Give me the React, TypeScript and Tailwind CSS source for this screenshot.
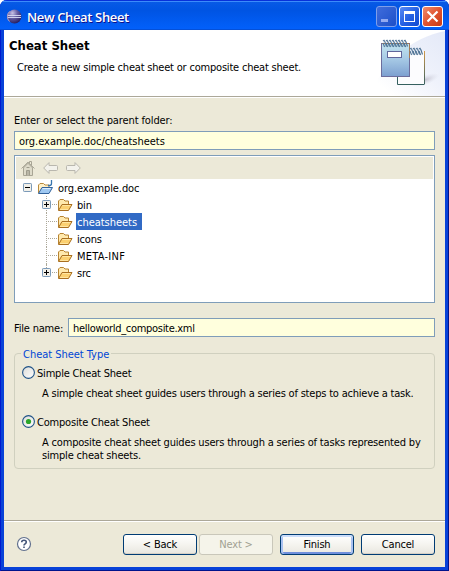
import type { ReactNode } from "react";

function EclipseIcon() {
  return (
    <svg width="15" height="15" viewBox="0 0 15 15">
      <defs>
        <radialGradient id="orb" cx="0.35" cy="0.25" r="0.8">
          <stop offset="0" stopColor="#c9c3e6" />
          <stop offset="0.45" stopColor="#665fa5" />
          <stop offset="1" stopColor="#241b5c" />
        </radialGradient>
      </defs>
      <circle cx="7.5" cy="7.5" r="6.9" fill="url(#orb)" />
      <path d="M1 6.500h13M1 8.500h13" stroke="#d9def5" strokeWidth="0.9" />
      <path d="M2.500 2.500A7 7 0 0 0 2.500 12.500" stroke="#e7b9bd" strokeWidth="0.8" fill="none" />
    </svg>
  );
}

function NotebookArt() {
  const coil = (x: number, y: number, n: number) =>
    Array.from({ length: n }, (_, i) => (
      <path key={`${x}-${i}`} d={`M${x + i * 3} ${y + 1}l1-.7 1 1.700 1.500 4.500M${x + i * 3} ${y + 3}l1.600 4`} stroke={i % 2 ? "#4e7294" : "#587b9c"} strokeWidth="1.200" fill="none" />
    ));
  return (
    <svg width="75" height="66" viewBox="370 30 75 66">
      <defs>
        <linearGradient id="swoosh" x1="0" y1="1" x2="1" y2="0">
          <stop offset="0.15" stopColor="#fff" />
          <stop offset="0.55" stopColor="#eff2fb" />
          <stop offset="1" stopColor="#e4e9f8" />
        </linearGradient>
        <linearGradient id="cover" x1="0" y1="0" x2="0" y2="1">
          <stop offset="0" stopColor="#c3e5f0" />
          <stop offset="0.5" stopColor="#a4c7e4" />
          <stop offset="1" stopColor="#7c9fd0" />
        </linearGradient>
        <linearGradient id="edge" x1="0" y1="0" x2="0" y2="1">
          <stop offset="0" stopColor="#d39a4b" />
          <stop offset="1" stopColor="#375f5e" />
        </linearGradient>
        <radialGradient id="shade">
          <stop offset="0" stopColor="#b9b6c4" stopOpacity="0.8" />
          <stop offset="1" stopColor="#d8dbe8" stopOpacity="0" />
        </radialGradient>
      </defs>
      <path d="M370 96C383 60 412 38 445 31V96Z" fill="url(#swoosh)" />
      <ellipse cx="425" cy="80" rx="15" ry="5" fill="url(#shade)" transform="rotate(-20 425 80)" />
      <path d="M397.500 52V84.500H424.500V51.500Z" fill="#fcfcfe" />
      <path d="M397.500 76V84.500H424.500" fill="none" stroke="#35605f" />
      <rect x="424" y="51" width="1" height="33" fill="url(#edge)" />
      <rect x="381.500" y="43.500" width="28" height="33" fill="url(#cover)" stroke="#6c6d9c" />
      <path d="M409.500 44v14M382 43.500h27" stroke="#a87b52" />
      <rect x="387.500" y="51.500" width="14" height="6" fill="#fff" stroke="#60669b" />
      {coil(383, 40, 8)}
      {coil(410, 48, 4)}
    </svg>
  );
}

function HomeIcon() {
  return (
    <svg width="14" height="16" viewBox="0 0 14 16">
      <path d="M2.500 8v7.500h9V8L7 3Z" fill="#dedbca" />
      <path d="M.5 8.500 7 2l6.500 6.500M2.500 8v7.500h9V8M10.500 5V1.500h-2V3" fill="none" stroke="#a8a595" />
      <path d="M5.500 15.500v-5h3v5M5.500 7.500h3" fill="#b9b6a6" stroke="#9f9c8c" />
      <path d="M2 8 7 3l5 5" fill="none" stroke="#b5b2a2" strokeWidth="1.300" />
    </svg>
  );
}

function ArrowIcon({ flip = false }: { flip?: boolean }) {
  return (
    <svg width="15" height="12" viewBox="0 0 15 12" className={flip ? "-scale-x-100" : ""}>
      <path d="M.7 6 6 .6V3.500h7.500q1 0 1 1v3q0 1-1 1H6v2.900Z" fill="#f3f2ec" stroke="#b9b7ae" strokeLinejoin="round" />
    </svg>
  );
}

function FolderIcon() {
  return (
    <svg width="16" height="14" viewBox="0 0 16 14">
      <path d="M1.500 12V3L3 1.500h3.500L8 3h3.500v3" fill="#ffe9ad" stroke="#b78331" />
      <path d="M1.500 12.500 5 6.500h10l-3.500 6Z" fill="#fbd071" stroke="#a96f20" strokeLinejoin="round" />
      <path d="M5.500 7.500h8M3 11.500h8" stroke="#ffe6a1" />
    </svg>
  );
}

function ProjectIcon() {
  return (
    <svg width="17" height="16" viewBox="0 0 17 16">
      <path d="M1.500 13V5L3 3.500h3.500L8 5h4v3" fill="#fff1c8" stroke="#ba8b3d" />
      <path d="M1.500 13.500 5 7.500h10.500l-3.500 6Z" fill="#9fc8f1" stroke="#31629b" strokeLinejoin="round" />
      <path d="M5.500 8.500h8" stroke="#ddecfb" />
      <path d="M14.500 0v3.500q0 2-2 2h-1.500" fill="none" stroke="#3775ae" strokeWidth="1.300" />
    </svg>
  );
}

function Expander({ open = false }: { open?: boolean }) {
  return (
    <svg width="9" height="9" viewBox="0 0 9 9" className="relative shrink-0">
      <rect x=".5" y=".5" width="8" height="8" rx=".7" fill="#f2f0e9" stroke="#7b9ab9" />
      <path d={open ? "M2 4.500h5" : "M2 4.500h5M4.500 2v5"} stroke="#000" />
    </svg>
  );
}

function TreeRow({ label, expandable = false, selected = false, last = false }: { label: string; expandable?: boolean; selected?: boolean; last?: boolean }) {
  return (
    <div className="flex h-[17px] items-center pl-[26px]">
      <div className="relative flex h-[17px] w-[15px] items-center">
        <div className={`absolute left-1 top-0 border-l border-dotted border-[#aca899] ${last ? "h-2" : "h-[17px]"}`} />
        <div className="absolute left-1 top-2 w-[11px] border-t border-dotted border-[#aca899]" />
        {expandable && <Expander />}
      </div>
      <FolderIcon />
      <span className={`ml-[3px] flex h-[17px] items-center pt-[2px] pl-px ${selected ? "w-[66px] bg-[#316ac5] tracking-[-0.03px] text-white" : label === "META-INF" ? "tracking-[0.25px]" : ""}`}>{label}</span>
    </div>
  );
}

function Radio({ checked = false }: { checked?: boolean }) {
  return (
    <svg width="13" height="13" viewBox="0 0 13 13">
      <defs>
        <linearGradient id="dial" x1="0" y1="0" x2="1" y2="1">
          <stop offset="0" stopColor="#dcdcd7" />
          <stop offset="1" stopColor="#fff" />
        </linearGradient>
      </defs>
      <circle cx="6.500" cy="6.500" r="5.900" fill="url(#dial)" stroke="#1f5286" strokeWidth="1.100" />
      {checked && <circle cx="6.500" cy="6.500" r="2.600" fill="#2aa52a" />}
    </svg>
  );
}

function DialogButton({ children, kind = "normal" }: { children: ReactNode; kind?: "normal" | "disabled" | "primary" }) {
  const look = {
    normal: "border-[#003c74] bg-linear-to-b from-white via-[#f5f4ef] to-[#e8e6df] shadow-[inset_0_-1px_#d6d0c5]",
    disabled: "border-[#c9c7ba] bg-[#f5f4ea] text-[#a1a192]",
    primary: "border-[#003c74] bg-linear-to-b from-white via-[#f5f4ef] to-[#eae8e1] shadow-[inset_0_2px_#cbddfa,inset_2px_0_#a9c1f0,inset_-2px_0_#a9c1f0,inset_0_-2px_#6f8fdc]",
  }[kind];
  return <button className={`h-[21px] w-[74px] rounded-[3px] border pt-px leading-[18px] ${look}`}>{children}</button>;
}

function CaptionButton({ type }: { type: "min" | "max" | "close" }) {
  const look = {
    min: "border-[#7f9ee9] bg-linear-to-br from-[#3f6cdc] to-[#1c4fc8]",
    max: "border-white bg-linear-to-br from-[#5a8af4] via-[#2762e4] to-[#1149d0]",
    close: "border-white bg-linear-to-br from-[#ee8b6c] via-[#e05330] to-[#c93a12]",
  }[type];
  return (
    <div className={`flex size-[21px] items-center justify-center rounded-[3px] border ${look}`}>
      <svg width="19" height="19" viewBox="0 0 19 19">
        {type === "min" && <rect x="4" y="12" width="7" height="3" fill="#92aaf0" />}
        {type === "max" && <path d="M4 4h11v11H4ZM5 7v7h9V7Z" fill="#fff" fillRule="evenodd" />}
        {type === "close" && <path d="m4.500 4.500 10 10m0-10-10 10" stroke="#fff" strokeWidth="2.200" />}
      </svg>
    </div>
  );
}

export default function App() {
  return (
    <div className="flex h-[571px] w-[449px] flex-col overflow-hidden rounded-t-[7px] bg-[#0842d8] font-['DejaVu_Sans_Condensed','DejaVu_Sans',sans-serif] text-[11px] leading-[13px] tracking-[-0.2px] whitespace-nowrap text-black shadow-[inset_1px_0_#0019cf,inset_-1px_0_#00138c,inset_0_-1px_#00138c]">
      <div className="flex h-[30px] items-center bg-linear-to-b from-[#0a5be6] from-0% via-[#0054e3] via-35% to-[#0261fc] pl-[6px] shadow-[inset_0_1px_#0831d9,inset_0_2px_#3b8bfb,inset_0_-1px_#0450d8]">
        <div className="mt-[3px] ml-px">
          <EclipseIcon />
        </div>
        <span className="mt-1 ml-[5px] font-['Open_Sans',sans-serif] text-[13px] font-semibold tracking-[-0.36px] text-white [text-shadow:1px_1px_#0f1089]">New Cheat Sheet</span>
        <div className="mt-[3px] mr-[6px] ml-auto flex gap-[2px]">
          <CaptionButton type="min" />
          <CaptionButton type="max" />
          <CaptionButton type="close" />
        </div>
      </div>

      <div className="mx-1 mb-1 flex flex-1 flex-col bg-[#ece9d8]">
        <header className="flex h-[66px] justify-between bg-white">
          <div className="pt-2">
            <h1 className="ml-[5px] text-[13px] leading-4 font-bold tracking-[0px]">Cheat Sheet</h1>
            <p className="mt-[7px] ml-[13px]">Create a new simple cheat sheet or composite cheat sheet.</p>
          </div>
          <NotebookArt />
        </header>
        <div className="h-[2px] border-t border-b border-t-[#aca899] border-b-white" />

        <main className="mx-[10px] flex flex-col">
          <label className="mt-4 h-[17px] tracking-[-0.11px]">Enter or select the parent folder:</label>
          <div className="flex h-[19px] items-center border border-[#7f9db9] bg-[#ffffdd] pt-px pl-1 tracking-[-0.03px]">org.example.doc/cheatsheets</div>

          <section className="mt-[5px] h-[148px] border border-[#7f9db9] bg-white p-px">
            <div className="flex h-[22px] items-center gap-2 bg-[#ece9d8] pl-[5px]">
              <HomeIcon />
              <ArrowIcon />
              <ArrowIcon flip />
            </div>
            <div className="flex h-[17px] items-center pl-[7px]">
              <Expander open />
              <div className="ml-[5px] h-4 w-[17px]">
                <ProjectIcon />
              </div>
              <span className="ml-1 pt-[2px] tracking-[-0.1px]">org.example.doc</span>
            </div>
            <TreeRow label="bin" expandable />
            <TreeRow label="cheatsheets" selected />
            <TreeRow label="icons" />
            <TreeRow label="META-INF" />
            <TreeRow label="src" expandable last />
          </section>

          <div className="mt-[15px] flex h-[19px] items-center">
            <label className="w-[54px] pt-[2px]">File name:</label>
            <div className="flex h-[19px] flex-1 items-center border border-[#7f9db9] bg-[#ffffdd] pt-[2px] pl-1 tracking-[-0.3px]">helloworld_composite.xml</div>
          </div>

          <fieldset className="mt-[10px] h-[122px] rounded-[4px] border border-[#d0d0bf] pl-[7px]">
            <legend className="-ml-px h-[13px] px-[2px] pt-px tracking-[-0.03px] text-[#0046d5]">Cheat Sheet Type</legend>
            <div className="mt-[6px] flex h-[13px] items-center gap-[2px]">
              <Radio />
              <span className="pt-[2px]">Simple Cheat Sheet</span>
            </div>
            <p className="mt-2 ml-5 tracking-[-0.2px]">A simple cheat sheet guides users through a series of steps to achieve a task.</p>
            <div className="mt-[15px] flex h-[13px] items-center gap-[2px]">
              <Radio checked />
              <span className="pt-[2px]">Composite Cheat Sheet</span>
            </div>
            <p className="mt-2 ml-5 tracking-[-0.18px]">
              A composite cheat sheet guides users through a series of tasks represented by
              <br />
              simple cheat sheets.
            </p>
          </fieldset>
        </main>

        <footer className="mt-auto flex h-[47px] items-start border-t border-[#aca899] pr-[10px] pl-3 shadow-[inset_0_1px_#fff]">
          <svg width="16" height="16" viewBox="0 0 16 16" className="mt-[15px]">
            <circle cx="8" cy="8" r="6.500" fill="#fff" stroke="#62718e" strokeWidth="1.200" />
            <path d="M5.700 6.300q0-2 2.300-2t2.300 1.800q0 1.200-1.300 1.800-1 .5-1 1.600M8 10.500v1.500" fill="none" stroke="#45577a" strokeWidth="1.600" />
          </svg>
          <div className="mt-[13px] ml-auto flex">
            <DialogButton>&lt; Back</DialogButton>
            <div className="ml-[2px]">
              <DialogButton kind="disabled">Next &gt;</DialogButton>
            </div>
            <div className="mx-[7px]">
              <DialogButton kind="primary">Finish</DialogButton>
            </div>
            <DialogButton>Cancel</DialogButton>
          </div>
        </footer>
      </div>
    </div>
  );
}
